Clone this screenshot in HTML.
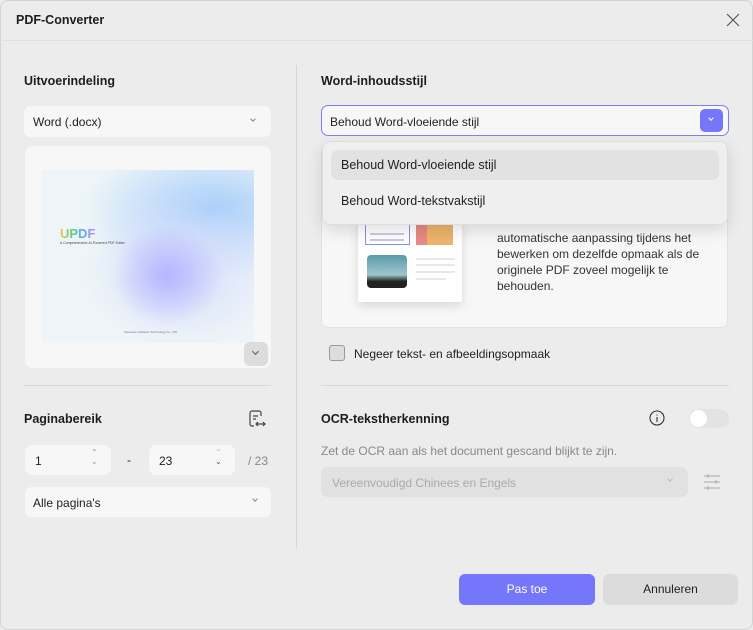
<!DOCTYPE html>
<html><head><meta charset="utf-8"><style>
*{box-sizing:border-box;margin:0;padding:0}
body{width:753px;height:630px;background:#ececec;font-family:"Liberation Sans",sans-serif;color:#222;position:relative;overflow:hidden;font-size:12px}
.a{position:absolute}
.b{font-weight:bold;font-size:12.5px;color:#1d1d1d}
.box{background:#f7f7f7;border-radius:7px}
.chev{position:absolute;width:6px;height:6px;border-right:1.2px solid #888;border-bottom:1.2px solid #888;transform:rotate(45deg)}
</style></head><body>
<div class="a" style="left:0;top:0;width:753px;height:630px;border:1px solid #d4d4d4;border-radius:8px"></div>
<div class="a b" style="left:16px;top:13px;font-size:12.5px">PDF-Converter</div>
<svg class="a" style="left:726px;top:13px" width="14" height="14"><path d="M1 1L13 13M13 1L1 13" stroke="#555" stroke-width="1.2"/></svg>
<div class="a" style="left:0;top:40px;width:753px;height:1px;background:#e0e0e0"></div>
<div class="a" style="left:296px;top:65px;width:1px;height:484px;background:#d6d6d6"></div>

<div class="a b" style="left:24px;top:74px">Uitvoerindeling</div>
<div class="a box" style="left:24px;top:106px;width:247px;height:31px"></div>
<div class="a" style="left:33px;top:115px;font-size:12px">Word (.docx)</div>
<div class="chev" style="left:251px;top:117px;width:4px;height:4px"></div>
<div class="a box" style="left:25px;top:146px;width:246px;height:222px;border-radius:8px"></div>
<div class="a" style="left:42px;top:170px;width:212px;height:173px;background:radial-gradient(ellipse 55px 50px at 125px 105px,#b4b6ff,transparent),radial-gradient(ellipse 100px 80px at 140px 100px,#d6dcfb,transparent),radial-gradient(ellipse 130px 70px at 170px 40px,#a6cdfa,transparent),#eef5f8"></div>
<div class="a" style="left:60px;top:226px;font-size:13px;font-weight:bold;background:linear-gradient(90deg,#f6c543,#5fcf7d,#5aa7f5,#c58af7);-webkit-background-clip:text;color:transparent">UPDF</div>
<div class="a" style="left:60px;top:241px;font-size:3.5px;color:#445">A Comprehensive AI-Powered PDF Editor</div>
<div class="a" style="left:124px;top:330px;font-size:3px;color:#778">Superace Software Technology Co.,LTD</div>
<div class="a" style="left:244px;top:342px;width:24px;height:24px;background:#dcdcdc;border-radius:6px"></div>
<div class="chev" style="left:253px;top:349px;width:5px;height:5px;border-color:#555"></div>
<div class="a" style="left:24px;top:385px;width:247px;height:1px;background:#d8d8d8"></div>

<div class="a b" style="left:24px;top:412px">Paginabereik</div>
<svg class="a" style="left:247px;top:409px" width="20" height="20" fill="none" stroke="#444" stroke-width="1.2"><path d="M12 2H5a2 2 0 0 0-2 2v11a2 2 0 0 0 2 2h2M12 2a2 2 0 0 1 2 2v3M6 7h5M6 10h3M9 15h9M11 13l-2 2 2 2M16 13l2 2-2 2"/></svg>
<div class="a box" style="left:25px;top:445px;width:86px;height:30px"></div>
<div class="a" style="left:35px;top:454px">1</div>
<div class="a" style="left:91px;top:448px;font-size:8px;color:#999;line-height:9px">&#8963;<br>&#8964;</div>
<div class="a" style="left:127px;top:453px">-</div>
<div class="a box" style="left:149px;top:445px;width:86px;height:30px"></div>
<div class="a" style="left:159px;top:454px">23</div>
<div class="a" style="left:215px;top:448px;font-size:8px;color:#555;line-height:9px"><span style="color:#bbb">&#8963;</span><br>&#8964;</div>
<div class="a" style="left:248px;top:454px;color:#888">/ 23</div>
<div class="a box" style="left:25px;top:487px;width:246px;height:30px"></div>
<div class="a" style="left:33px;top:496px">Alle pagina's</div>
<div class="chev" style="left:253px;top:497px;width:4px;height:4px"></div>

<div class="a b" style="left:321px;top:74px">Word-inhoudsstijl</div>
<div class="a box" style="left:321px;top:146px;width:407px;height:182px;border:1px solid #e2e2e2"></div>
<div class="a" style="left:358px;top:180px;width:104px;height:122px;background:#fff;box-shadow:0 4px 10px rgba(0,0,0,.12)"></div>
<div class="a" style="left:365px;top:185px;width:45px;height:60px;border:1px solid #8d8fe8"></div>
<div class="a" style="left:370px;top:233px;width:34px;height:2px;background:#c8cae8"></div>
<div class="a" style="left:370px;top:239px;width:34px;height:2px;background:#c8cae8"></div>
<div class="a" style="left:416px;top:222px;width:37px;height:23px;background:linear-gradient(90deg,#e98a86 30%,#edb46d 30%)"></div>
<div class="a" style="left:367px;top:255px;width:40px;height:33px;border-radius:4px;background:linear-gradient(#5a9aa8,#9fc6cc 60%,#222 80%)"></div>
<div class="a" style="left:416px;top:258px;width:39px;height:2px;background:#e8e8e8;box-shadow:0 6px 0 #e8e8e8,0 13px 0 #e8e8e8"></div>
<div class="a" style="left:416px;top:278px;width:30px;height:2px;background:#e8e8e8"></div>
<div class="a" style="left:497px;top:230px;font-size:12px;line-height:16px;color:#333">automatische aanpassing tijdens het<br>bewerken om dezelfde opmaak als de<br>originele PDF zoveel mogelijk te<br>behouden.</div>
<div class="a" style="left:322px;top:141px;width:406px;height:84px;background:#efefef;border:1px solid #ddd;border-radius:8px;box-shadow:0 6px 16px rgba(0,0,0,.12)"></div>
<div class="a" style="left:331px;top:150px;width:388px;height:30px;background:#e2e2e2;border-radius:7px"></div>
<div class="a" style="left:341px;top:158px;font-size:12.5px">Behoud Word-vloeiende stijl</div>
<div class="a" style="left:341px;top:194px;font-size:12.5px">Behoud Word-tekstvakstijl</div>
<div class="a box" style="left:321px;top:105px;width:408px;height:31px;border:1px solid #7d80ef"></div>
<div class="a" style="left:330px;top:115px">Behoud Word-vloeiende stijl</div>
<div class="a" style="left:700px;top:109px;width:23px;height:23px;background:#7577fb;border-radius:5px"></div>
<div class="chev" style="left:709px;top:116px;width:4px;height:4px;border-color:#fff"></div>

<div class="a" style="left:329px;top:345px;width:16px;height:16px;border:1px solid #999;border-radius:3px;background:#ddd"></div>
<div class="a" style="left:354px;top:347px">Negeer tekst- en afbeeldingsopmaak</div>
<div class="a" style="left:321px;top:385px;width:408px;height:1px;background:#d8d8d8"></div>
<div class="a b" style="left:321px;top:412px">OCR-tekstherkenning</div>
<svg class="a" style="left:649px;top:410px" width="16" height="16" fill="none" stroke="#333" stroke-width="1.1"><circle cx="8" cy="8" r="7"/><path d="M8 7v5M8 4.5v1"/></svg>
<div class="a" style="left:689px;top:409px;width:40px;height:19px;border-radius:10px;background:#e3e3e3"></div>
<div class="a" style="left:690px;top:410px;width:17px;height:17px;border-radius:50%;background:#fff"></div>
<div class="a" style="left:321px;top:444px;color:#888">Zet de OCR aan als het document gescand blijkt te zijn.</div>
<div class="a" style="left:321px;top:467px;width:367px;height:30px;background:#e1e1e1;border-radius:7px"></div>
<div class="a" style="left:332px;top:476px;color:#aaa">Vereenvoudigd Chinees en Engels</div>
<div class="chev" style="left:668px;top:477px;width:4px;height:4px;border-color:#bbb"></div>
<svg class="a" style="left:703px;top:473px" width="18" height="18" stroke="#aaa" stroke-width="1"><path d="M1 3h16M1 9h16M1 15h16M5 1v4M13 7v4M5 13v4"/></svg>

<div class="a" style="left:459px;top:574px;width:136px;height:31px;background:#7577fb;border-radius:6px;color:#fff;text-align:center;line-height:31px">Pas toe</div>
<div class="a" style="left:603px;top:574px;width:135px;height:31px;background:#dcdcdc;border-radius:6px;text-align:center;line-height:31px">Annuleren</div>
</body></html>
